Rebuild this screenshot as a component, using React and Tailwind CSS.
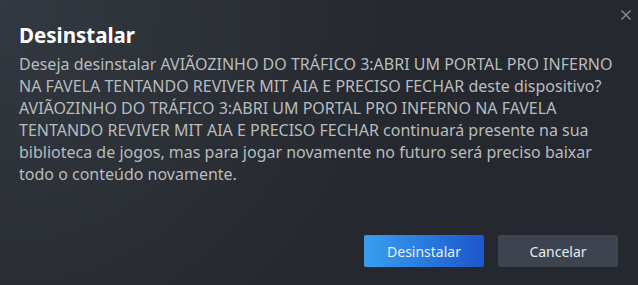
const FONT = { fontFamily: '"Noto Sans", "Open Sans", Arial, sans-serif' }

const GAME = 'AVIÃOZINHO DO TRÁFICO 3:ABRI UM PORTAL PRO INFERNO NA FAVELA TENTANDO REVIVER MIT AIA E PRECISO FECHAR'

export default function App() {
  return (
    <div
      style={FONT}
      className="relative w-[638px] h-[285px] overflow-hidden flex flex-col bg-[#25282e] bg-[radial-gradient(circle_at_top_left,rgba(74,81,92,0.4)_0%,rgba(75,81,92,0)_60%)]"
    >
      {/* close */}
      <button className="absolute right-[7px] top-[10px] w-[10px] h-[10px] text-[#8b929a]">
        <svg viewBox="0 0 10 10" width="10" height="10" fill="none" stroke="currentColor" strokeWidth="1.3">
          <path d="M0.5 0.5 L9.5 9.5 M9.5 0.5 L0.5 9.5" />
        </svg>
      </button>

      <div className="px-[19px] pt-[22px]">
        <h1 className="text-[20.5px] leading-[27px] font-bold text-white">Desinstalar</h1>
        <p className="mt-[4px] text-[16px] leading-[22px] text-[#b8bcbf]">
          Deseja desinstalar {GAME} deste dispositivo? {GAME} continuará presente na sua biblioteca de jogos, mas para jogar novamente no futuro será preciso baixar todo o conteúdo novamente.
        </p>
      </div>

      <div className="mt-auto flex justify-end gap-[14px] px-[20px] pb-[18px]">
        <button className="w-[120px] h-[32px] rounded-[2px] bg-gradient-to-r from-[#3a9ff0] to-[#1f55cb] text-[14px] text-[#e6f0fa]">
          Desinstalar
        </button>
        <button className="w-[120px] h-[32px] rounded-[2px] bg-[#3d4450] text-[14px] text-[#e6eaee]">
          Cancelar
        </button>
      </div>
    </div>
  )
}
